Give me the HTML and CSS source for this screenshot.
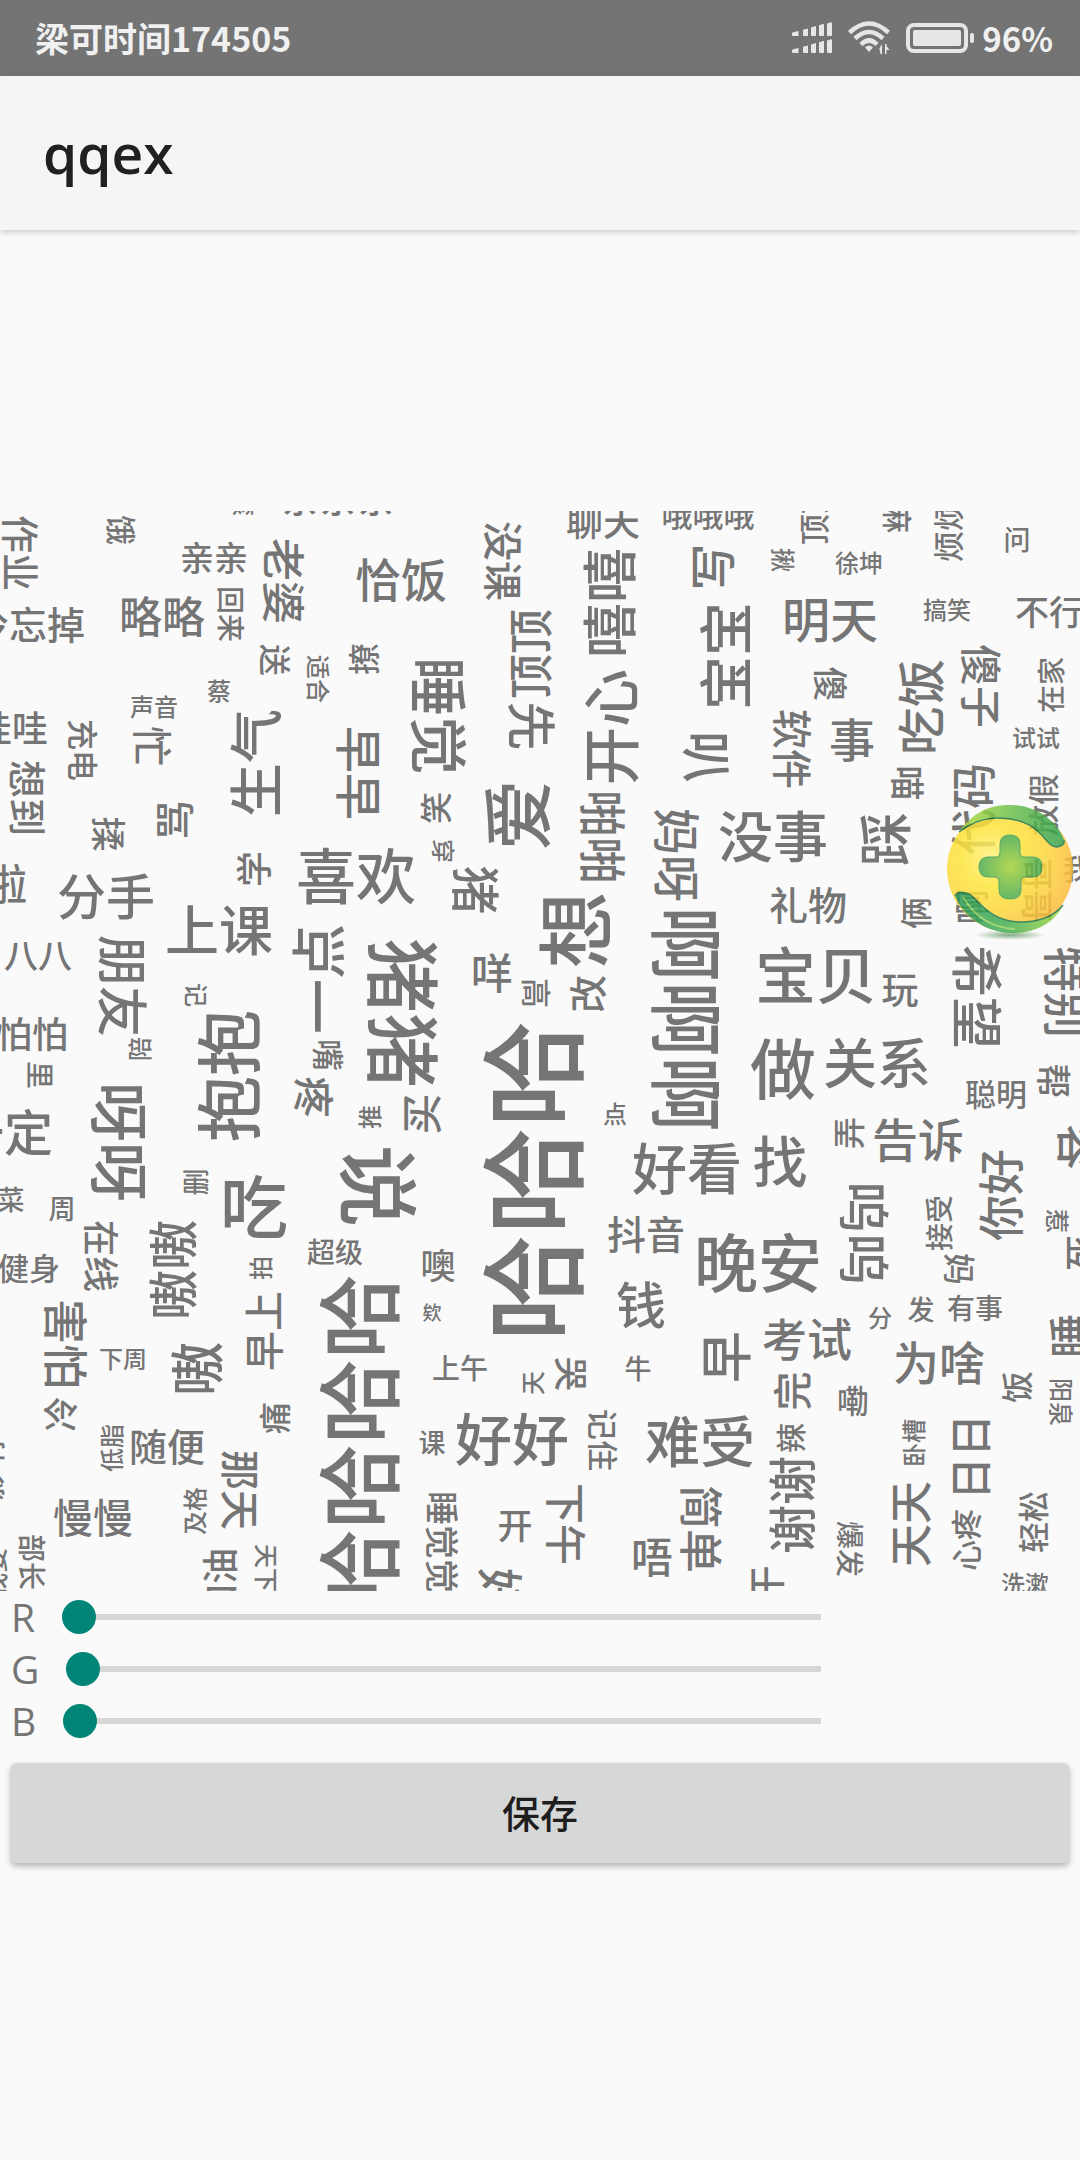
FILE: index.html
```html
<!DOCTYPE html>
<html lang="zh-CN">
<head>
<meta charset="utf-8">
<meta name="viewport" content="width=device-width, initial-scale=1">
<title>qqex</title>
<link rel="stylesheet" href="styles.css">
</head>
<body>
<div class="status">
  <span class="carrier">梁可时间174505</span>
  <div class="indicators">
    <svg class="signal" width="40" height="32" viewBox="0 0 40 32" aria-hidden="true">
      <path d="M0 11.500q0-1 1-1.200l5.500-1.300V14H1q-1 0-1-1zM11 7.800l5-1.300V14h-4q-1 0-1-1zM19 5.500l5-1.500v9q0 1-1 1h-3q-1 0-1-1zM27 3.300l5-1.500V13q0 1-1 1h-3q-1 0-1-1zM35 1.500l4-1.300q1 0 1 1V13q0 1-1 1h-3q-1 0-1-1z"/>
      <path d="M0 11.500q0-1 1-1.200l5.500-1.300V14H1q-1 0-1-1zM11 7.800l5-1.300V14h-4q-1 0-1-1zM19 5.500l5-1.500v9q0 1-1 1h-3q-1 0-1-1zM27 3.300l5-1.500V13q0 1-1 1h-3q-1 0-1-1zM35 1.500l4-1.300q1 0 1 1V13q0 1-1 1h-3q-1 0-1-1z" transform="translate(0 17)"/>
    </svg>
    <svg class="wifi" width="42" height="34" viewBox="0 0 42 34" aria-hidden="true">
      <g fill="none" stroke="#e6e6e6" stroke-width="4.500">
        <path d="M1.500 11.500Q21-6.500 40.500 11.500"/>
        <path d="M7 17.500Q21 4.500 35 17.500"/>
        <path d="M13 23.500Q21 15.500 29 23.500"/>
      </g>
      <path d="M21 31l-4-4.500q4-4 8 0z"/>
      <path d="M34 23v10h-1.500l-1-5h-.5l3-5zM37 33V23h1.500v2l3 4h-3v4z"/>
    </svg>
    <svg class="battery" width="68" height="30" viewBox="0 0 68 30" aria-hidden="true">
      <rect x="2" y="2" width="58" height="26" rx="6" fill="none" stroke="#e6e6e6" stroke-width="4"/>
      <rect x="7" y="7" width="48" height="16" rx="2"/>
      <rect x="64" y="10" width="4" height="10" rx="2"/>
    </svg>
    <span class="percent">96%</span>
  </div>
</div>
<header class="appbar"><h1>qqex</h1></header>
<main>
  <svg class="cloud" id="cloud" viewBox="0 0 1080 1080" role="img" aria-label="词云"></svg>
  <form class="controls">
    <div class="channel"><label for="red">R</label><input id="red" type="range" min="0" max="255" value="0"></div>
    <div class="channel"><label for="green">G</label><input id="green" type="range" min="0" max="255" value="0"></div>
    <div class="channel"><label for="blue">B</label><input id="blue" type="range" min="0" max="255" value="0"></div>
    <button class="save" type="button">保存</button>
  </form>
</main>
<button class="ball" type="button" aria-label="加速球">
  <svg width="130" height="140" viewBox="0 0 130 140" aria-hidden="true">
    <defs>
      <radialGradient id="gold" cx="35%" cy="40%" r="70%"><stop offset="0" stop-color="#fff27a"/><stop offset=".35" stop-color="#fee53a"/><stop offset=".7" stop-color="#fdd23c"/><stop offset="1" stop-color="#fcb83a"/></radialGradient>
      <linearGradient id="leaf" x1="0" x2="1"><stop offset="0" stop-color="#b4dc3c"/><stop offset=".5" stop-color="#6cc04a"/><stop offset="1" stop-color="#35a24c"/></linearGradient>
      <linearGradient id="leaf2" x1="0" x2="1"><stop offset="0" stop-color="#2c9a55"/><stop offset=".5" stop-color="#48b152"/><stop offset="1" stop-color="#a8d640"/></linearGradient>
      <radialGradient id="cross"><stop offset="0" stop-color="#a6d234"/><stop offset="1" stop-color="#4aab4c"/></radialGradient>
      <radialGradient id="shade"><stop offset="0" stop-color="#4f8a4f" stop-opacity=".7"/><stop offset="1" stop-color="#4f8a4f" stop-opacity="0"/></radialGradient>
    </defs>
    <ellipse cx="65" cy="135" rx="36" ry="5" fill="url(#shade)"/>
    <g opacity=".84">
      <circle cx="65" cy="69" r="63" fill="url(#gold)"/>
      <path d="M14 32C31 8 50 5 65 5c25 0 47 15 54 35 1 6-8 9-13 5C96 36 88 17 50 18 35 19 24 24 14 32z" fill="url(#leaf)"/>
      <path d="M14 32C24 24 35 19 50 18c38-1 46 18 56 27 5 4 14 1 13-5" fill="none" stroke="#1c7444" stroke-width="1.500"/>
      <path d="M10 96c3-6 13-4 19 2 14 15 26 24 47 24 21 0 34-7 42-17-8 18-29 29-52 28-26-1-47-16-56-37z" fill="url(#leaf2)"/>
      <path d="M10 96c3-6 13-4 19 2 14 15 26 24 47 24 21 0 34-7 42-17" fill="none" stroke="#1c7444" stroke-width="1.500"/>
      <path d="M18 97c12 20 30 31 52 32" fill="none" stroke="#8fd05c" stroke-width="2"/>
      <path d="M65 35q10 0 10 9v8q0 5 5 5h8q9 0 9 10t-9 10h-8q-4 0-4 5v8q0 9-11 9t-11-9v-8q0-5-5-5h-6q-9 0-9-10t9-10h7q5 0 5-5v-8q0-9 10-9z" fill="url(#cross)" stroke="#3d9c50"/>
    </g>
  </svg>
</button>
<script src="cloud.js"></script>
</body>
</html>
```
FILE: styles.css
```css
* { box-sizing: border-box; }

body {
  margin: 0;
  position: relative;
  min-height: 100vh;
  background: #fafafa;
  color: #757575;
  font-family: "Noto Sans CJK SC", sans-serif;
}

.status {
  display: flex;
  align-items: center;
  justify-content: space-between;
  height: 76px;
  padding: 0 27px 0 35px;
  background: #747474;
  color: #f0f0f0;
  font-size: 34px;
  font-weight: 700;
  line-height: 48px;
}

.indicators { display: flex; align-items: center; }
.indicators svg { fill: #e6e6e6; }
.signal { margin-right: 16px; }
.wifi { margin-right: 16px; }
.battery { margin-right: 8px; }
.percent { font-size: 33px; }

.appbar {
  display: flex;
  align-items: center;
  height: 154px;
  padding: 0 43px;
  background: #f5f5f5;
  box-shadow: 0 2px 6px rgba(0, 0, 0, .2);
}

.appbar h1 {
  margin: 0;
  color: #202020;
  font-family: "Open Sans", "Noto Sans", sans-serif;
  font-size: 55px;
  font-weight: 600;
  line-height: 76px;
}

main { padding-top: 281px; }

.cloud {
  display: block;
  width: 100%;
  height: auto;
  overflow: hidden;
}

.cloud text {
  fill: #757575;
  font-weight: 500;
  text-anchor: middle;
}

.channel {
  display: flex;
  align-items: center;
  width: 76%;
  height: 52px;
  padding-left: 11px;
}

.channel label {
  margin-right: 27px;
  font-family: "Open Sans", "Noto Sans", sans-serif;
  font-size: 39px;
  font-weight: 500;
  line-height: 52px;
}

.channel input {
  flex: 1;
  min-width: 0;
  height: 34px;
  margin: 0;
  appearance: none;
  background: none;
}

.channel input::-webkit-slider-runnable-track {
  height: 6px;
  background: #d6d6d6;
}

.channel input::-webkit-slider-thumb {
  appearance: none;
  width: 34px;
  height: 34px;
  margin-top: -14px;
  border-radius: 50%;
  background: #008577;
}

.save {
  display: block;
  width: calc(100% - 22px);
  height: 100px;
  margin: 16px 11px 0;
  padding: 0 0 4px;
  border: 0;
  border-radius: 5px;
  background: #d6d8d7;
  box-shadow: 0 3px 6px rgba(0, 0, 0, .3);
  color: #1e1e1e;
  font-family: inherit;
  font-size: 38px;
  font-weight: 500;
}

.ball {
  position: absolute;
  top: 800px;
  right: 5px;
  padding: 0;
  border: 0;
  background: none;
}

.ball svg { display: block; }
```
FILE: cloud.js
```js
// Each entry: word, centre x, centre y, font size, rotation in degrees.
const words = [
  ["作业",20,42,38,90],["饿",121,19,30,90],["滚",244,-7,24,90],["亲亲亲",338,-13,38,0],
  ["亲亲",214,47,34,0],["老婆",283,70,43,90],["略略",162,106,43,0],["回来",231,103,28,90],
  ["冷忘掉",28,114,38,0],["送",275,149,32,90],["适合",318,168,24,90],["撩",364,148,32,-90],
  ["蔡",219,180,24,0],["声音",154,196,24,0],["哇哇",12,217,36,0],["想到",27,287,38,90],
  ["充电",83,239,31,90],["忙",152,235,40,90],["骂",175,309,40,-90],["揉",108,323,35,90],
  ["生气",256,252,54,-90],["早早",359,262,47,90],["学",254,358,36,-90],["喜欢",356,365,60,0],
  ["吃",254,696,68,0],["啦",6,373,42,0],["分手",106,385,49,0],["上课",219,419,54,0],
  ["八八",38,444,34,0],["朋友",122,475,51,90],["一点",318,468,55,-90],["记",196,484,24,90],
  ["抱抱",229,565,66,-90],["陪",140,538,24,-90],["怕怕",32,523,36,0],["里",40,564,28,90],
  ["一定",4,621,49,0],["呀呀",119,631,60,90],["疼",314,586,41,90],["嘴",328,544,32,90],
  ["菜",11,689,27,0],["周",62,698,27,0],["删",196,671,27,-90],["嗷嗷",173,759,50,-90],
  ["在线",101,745,36,90],["健身",29,757,31,0],["超级",335,741,28,0],["拍",261,757,24,-90],
  ["早上",264,820,40,-90],["害怕",65,833,45,90],["嗷",197,858,54,-90],["下周",123,848,24,0],
  ["冷",61,903,35,-90],["痛",275,907,32,-90],["低脂",112,937,24,-90],["随便",167,936,38,0],
  ["那天",240,979,40,90],["及格",195,1000,24,-90],["慢慢",93,1007,40,0],["部长",32,1051,28,90],
  ["加油",220,1073,36,-90],["天下",266,1057,24,90],["我要",-5,1062,26,-90],["影响",-10,960,30,-90],
  ["哈哈哈哈",360,933,85,-90],
  ["恰饭",401,69,46,0],["没课",503,50,40,90],["顶顶",531,143,45,-90],["先",532,215,49,90],
  ["睡觉",438,205,59,90],["笑",436,297,32,-90],["穿",443,340,24,90],["爱",517,304,71,-90],
  ["猪",476,379,49,90],["嘻嘻",609,92,55,-90],["聊天",603,11,37,0],["开心",611,216,58,-90],
  ["啪啪",603,326,47,90],["妈呀",677,344,47,90],["写",712,56,47,-90],["哦哦哦",708,4,31,0],
  ["宝宝",726,145,54,-90],["叭",707,246,52,90],["想",576,419,77,-90],["咩",492,462,42,0],
  ["高",536,482,30,90],["改",588,483,38,-90],["猪猪",402,502,75,90],["哈哈哈",533,670,107,-90],
  ["推",370,606,24,-90],["买",421,603,41,-90],["说",378,675,82,90],["点",615,603,24,0],
  ["啊啊啊",686,508,75,90],["好看",687,657,55,0],["抖音",646,723,39,0],["噢",438,755,35,0],
  ["欸",432,802,19,0],["上午",460,857,28,0],["天",533,872,24,-90],["哭",571,863,34,90],
  ["牛",638,858,27,0],["钱",641,794,50,0],["课",432,932,27,0],["好好",512,928,57,0],
  ["记住",603,929,31,90],["难受",700,930,55,0],["睡觉觉",442,1031,34,90],["开",515,1015,35,0],
  ["下午",566,1013,41,90],["唔",652,1046,42,0],["简单",701,1018,44,90],["好",500,1080,46,90],
  ["早",726,846,52,-90],["晚安",758,752,64,0],
  ["顶顶",814,3,31,-90],["麻",897,7,30,90],["烦烦",948,20,31,-90],["问",1017,29,27,0],
  ["揪",783,49,24,90],["徐坤",859,52,24,0],["明天",830,109,48,0],["搞笑",947,99,24,0],
  ["不行",1049,101,34,0],["傻",830,173,35,90],["吃饭",921,196,48,-90],["傻子",981,175,42,90],
  ["在家",1051,174,28,-90],["软件",792,238,40,90],["事",852,229,46,0],["试试",1036,227,24,0],
  ["喵",907,272,35,90],["代码",973,298,46,-90],["放假",1043,294,31,-90],["踩",885,328,54,-90],
  ["没事",773,325,55,0],["哥哥",1037,379,32,90],["我们",1091,358,28,0],["礼物",808,394,39,0],
  ["俩",916,402,32,-90],["啊",972,396,35,-90],["宝贝",816,465,61,0],["玩",900,479,37,0],
  ["希望",977,486,52,90],["特别",1066,481,46,90],["做",783,558,66,0],["关系",877,552,54,0],
  ["聪明",996,583,31,0],["帮",1053,570,35,90],["弄",849,622,32,-90],["告诉",918,629,46,0],
  ["找",780,650,55,0],["容",1079,636,46,90],["你好",1001,684,46,-90],["呜呜",864,722,52,90],
  ["接受",939,712,28,-90],["惹",1057,710,24,90],["妈",959,758,32,90],["死",1082,742,36,-90],
  ["发",921,799,27,0],["有事",975,797,28,0],["分",880,807,24,0],["考试",807,829,45,0],
  ["为啥",939,852,46,0],["完",792,880,39,-90],["嘞",853,890,32,0],["睡",1070,825,44,-90],
  ["饭",1017,876,32,-90],["阳泉",1061,891,24,90],["辣",791,927,30,-90],["谢谢",792,994,49,-90],
  ["爆发",850,1038,28,90],["卧槽",914,932,24,-90],["日日",971,946,43,-90],["天天",911,1013,43,-90],
  ["心疼",966,1029,31,-90],["轻松",1033,1011,31,-90],["洗漱",1025,1073,24,0],["干",767,1073,37,-90]
];

const cloud = document.getElementById("cloud");
for (const [word, x, y, size, angle] of words) {
  const text = document.createElementNS("http://www.w3.org/2000/svg", "text");
  text.setAttribute("font-size", size);
  text.setAttribute("dy", ".38em");
  text.setAttribute("transform", `translate(${x} ${y}) rotate(${angle})`);
  text.textContent = word;
  cloud.append(text);
}
```
